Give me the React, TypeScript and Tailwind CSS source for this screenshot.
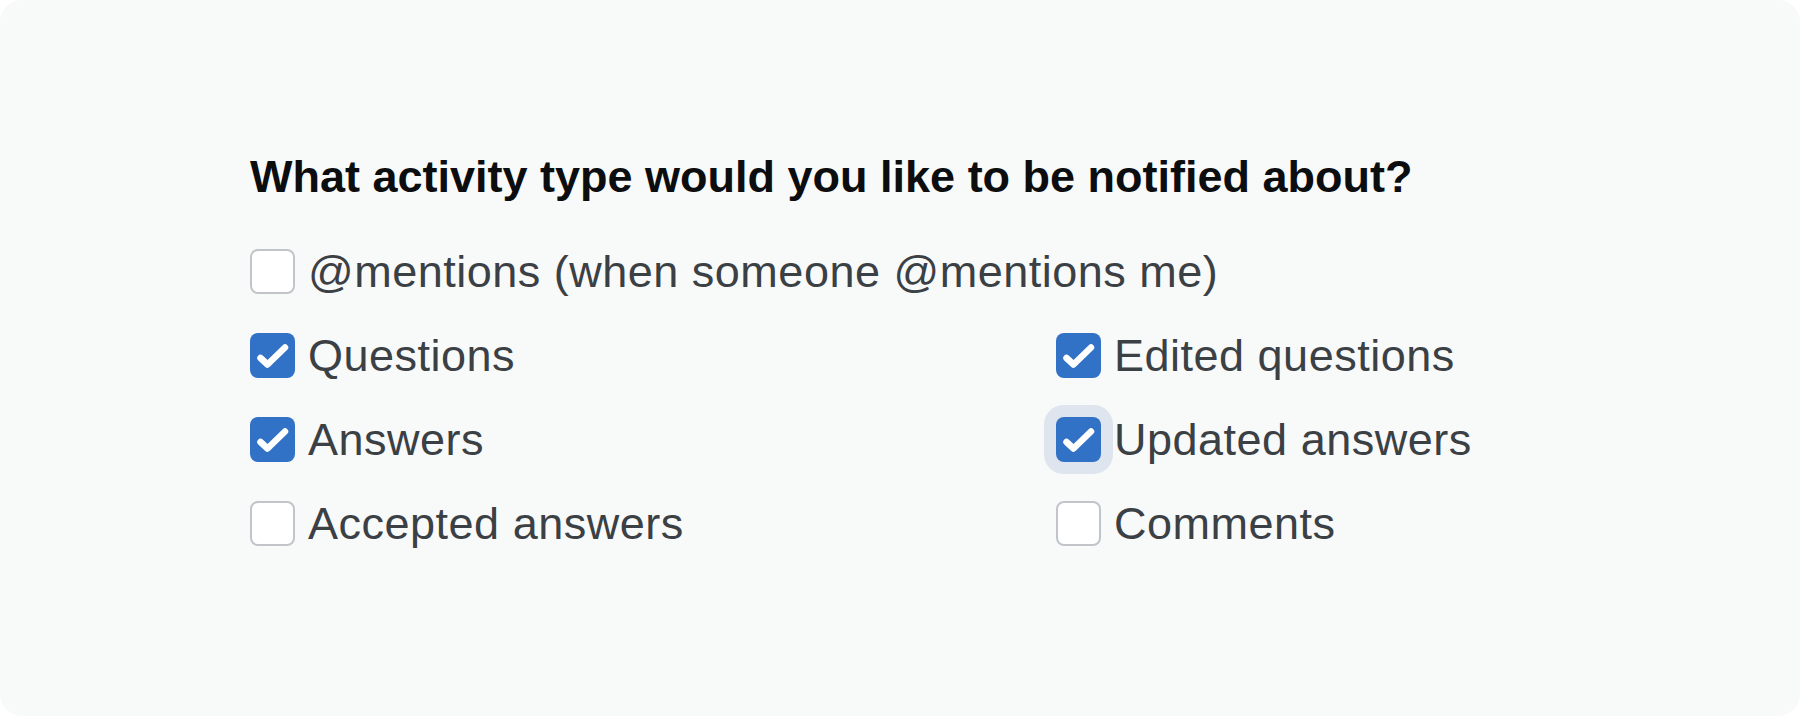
import { useState } from "react"

type Option = {
  label: string
  checked: boolean
  focused?: boolean
}

const leftCol: Option[] = [
  { label: "Questions", checked: true },
  { label: "Answers", checked: true },
  { label: "Accepted answers", checked: false },
]

const rightCol: Option[] = [
  { label: "Edited questions", checked: true },
  { label: "Updated answers", checked: true, focused: true },
  { label: "Comments", checked: false },
]

function CheckBox({ checked, focused, onToggle }: { checked: boolean; focused?: boolean; onToggle: () => void }) {
  return (
    <span
      className={
        "flex h-[45px] w-[45px] shrink-0 items-center justify-center rounded-[8px] " +
        (focused ? "ring-[12px] ring-[#dfe5ee] " : "") +
        (checked ? "bg-[#3172c6]" : "border-[2.5px] border-[#c1c5c9] bg-white")
      }
      onClick={onToggle}
    >
      {checked && (
        <svg viewBox="0 0 45 45" className="h-[45px] w-[45px]">
          <path d="M10.5 25 L17.5 31.5 L35 14.5" fill="none" stroke="white" strokeWidth="6.5" strokeLinecap="round" strokeLinejoin="round" />
        </svg>
      )}
    </span>
  )
}

function Row({ opt, onToggle }: { opt: Option; onToggle: () => void }) {
  return (
    <label className="flex h-[45px] cursor-pointer items-center gap-[13px]">
      <CheckBox checked={opt.checked} focused={opt.focused} onToggle={onToggle} />
      <span className="text-[45px] leading-[44px] tracking-[0.5px] text-[#3b4045]">{opt.label}</span>
    </label>
  )
}

export default function App() {
  const [mentions, setMentions] = useState<Option>({ label: "@mentions (when someone @mentions me)", checked: false })
  const [left, setLeft] = useState(leftCol)
  const [right, setRight] = useState(rightCol)

  const flip = (list: Option[], i: number) => list.map((o, j) => (j === i ? { ...o, checked: !o.checked } : o))

  return (
    <div className="h-[716px] w-[1800px] bg-white font-['Liberation_Sans',Arial,sans-serif]">
      <div className="h-full w-full rounded-[22px] bg-[#f8f9f9] pl-[250px] pt-[150px]">
        <h1 className="text-[45px] font-bold leading-[54px] text-[#0c0d0e]">
          What activity type would you like to be notified about?
        </h1>

        <div className="mt-[45px] flex flex-col gap-[39px]">
          <Row opt={mentions} onToggle={() => setMentions({ ...mentions, checked: !mentions.checked })} />

          <div className="grid grid-cols-[806px_auto]">
            <div className="flex flex-col gap-[39px]">
              {left.map((o, i) => (
                <Row key={o.label} opt={o} onToggle={() => setLeft(flip(left, i))} />
              ))}
            </div>
            <div className="flex flex-col gap-[39px]">
              {right.map((o, i) => (
                <Row key={o.label} opt={o} onToggle={() => setRight(flip(right, i))} />
              ))}
            </div>
          </div>
        </div>
      </div>
    </div>
  )
}
